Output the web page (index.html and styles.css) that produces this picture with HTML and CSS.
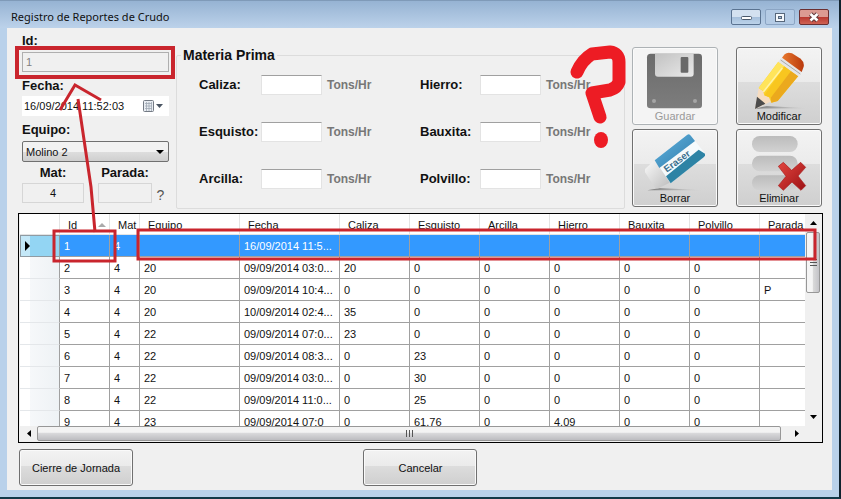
FILE: index.html
```html
<!DOCTYPE html>
<html lang="es">
<head>
    <meta charset="UTF-8">
    <meta name="viewport" content="width=device-width, initial-scale=1.0">
    <title>Registro de Reportes de Crudo</title>
    <link rel="stylesheet" href="styles.css">
</head>
<body>
    <div class="window">
        <header class="titlebar">
            <h1>Registro de Reportes de Crudo</h1>
            <div class="window-buttons">
                <button type="button" aria-label="Minimizar">
                    <svg width="28" height="14" viewBox="0 0 28 14"><rect x="9.500" y="6.500" width="10" height="3" rx="1" fill="#fff" stroke="#4b5a6c"/></svg>
                </button>
                <button type="button" class="maximize" aria-label="Maximizar">
                    <svg width="28" height="14" viewBox="0 0 28 14"><rect x="9.500" y="3.500" width="9" height="8" fill="#f4f8fc" stroke="#56677b"/><rect x="12.500" y="6.500" width="3" height="2" fill="#a9c0da" stroke="#56677b"/></svg>
                </button>
                <button type="button" class="close" aria-label="Cerrar">
                    <svg width="28" height="14" viewBox="0 0 28 14"><path d="M10.500 4l7 6.500M17.500 4l-7 6.500" stroke="#5f3a3c" stroke-width="4.500"/><path d="M10.500 4l7 6.500M17.500 4l-7 6.500" stroke="#fff" stroke-width="2.600"/></svg>
                </button>
            </div>
        </header>

        <main class="content">
            <form class="top">
                <!-- Datos del reporte -->
                <div class="report">
                    <label for="id">Id:</label>
                    <input type="text" id="id" class="id-box" value="1" disabled>
                    <label for="fecha">Fecha:</label>
                    <div class="date-box">
                        <input type="text" id="fecha" value="16/09/2014 11:52:03">
                        <button type="button" aria-label="Abrir calendario">
                            <svg width="22" height="14" viewBox="0 0 22 14">
                                <rect x="1.500" y="1.500" width="10" height="11" rx="1" fill="#e9edf2" stroke="#747b85"/>
                                <path d="M3 4.500h7M3 7h7M3 9.500h7M4.500 3v9M7 3v9M9.500 3v9" stroke="#a0a8b4" stroke-width="0.800"/>
                                <path d="M14 5h7l-3.500 4z" fill="#4a5563"/>
                            </svg>
                        </button>
                    </div>
                    <label for="equipo">Equipo:</label>
                    <select id="equipo">
                        <option>Molino 2</option>
                    </select>
                    <div class="pair">
                        <div class="field mat">
                            <label for="mat">Mat:</label>
                            <input type="text" id="mat" value="4" readonly>
                        </div>
                        <div class="field parada">
                            <label for="parada">Parada:</label>
                            <input type="text" id="parada" readonly>
                        </div>
                        <button type="button" class="help">?</button>
                    </div>
                </div>

                <fieldset class="materia">
                    <legend>Materia Prima</legend>
                    <label for="caliza">Caliza:</label>
                    <input type="text" id="caliza">
                    <span>Tons/Hr</span>
                    <label for="hierro">Hierro:</label>
                    <input type="text" id="hierro">
                    <span>Tons/Hr</span>
                    <label for="esquisto">Esquisto:</label>
                    <input type="text" id="esquisto">
                    <span>Tons/Hr</span>
                    <label for="bauxita">Bauxita:</label>
                    <input type="text" id="bauxita">
                    <span>Tons/Hr</span>
                    <label for="arcilla">Arcilla:</label>
                    <input type="text" id="arcilla">
                    <span>Tons/Hr</span>
                    <label for="polvillo">Polvillo:</label>
                    <input type="text" id="polvillo">
                    <span>Tons/Hr</span>
                </fieldset>

                <div class="actions">
                    <button type="button" class="action" disabled>
                        <svg width="60" height="57" viewBox="75 156 180 171">
                            <defs>
                                <linearGradient id="disk" x1="0" y1="0" x2="0" y2="1"><stop offset="0" stop-color="#6b6b6b"/><stop offset="1" stop-color="#7d7d7d"/></linearGradient>
                                <linearGradient id="shutter" x1="0" y1="0" x2="1" y2="1"><stop offset="0" stop-color="#c2c2c2"/><stop offset="1" stop-color="#e9e9e9"/></linearGradient>
                            </defs>
                            <path d="M92 161H236q10 0 10 10V315q0 10-10 10H92q-11 0-11-10V172q0-11 11-11z" fill="url(#disk)"/>
                            <path d="M105 161H221V221q0 9-9 9H114q-9 0-9-9z" fill="url(#shutter)"/>
                            <rect x="182" y="171" width="23" height="47" rx="3" fill="#686868"/>
                            <circle cx="102" cy="303" r="6" fill="#a5a5a5"/>
                            <circle cx="225" cy="303" r="6" fill="#a5a5a5"/>
                        </svg>
                        Guardar
                    </button>
                    <button type="button" class="action">
                        <svg width="60" height="57" viewBox="387 156 180 171">
                            <defs>
                                <linearGradient id="shade"><stop offset="0" stop-color="#777"/><stop offset="1" stop-color="#999" stop-opacity="0"/></linearGradient>
                                <linearGradient id="rubber"><stop offset="0" stop-color="#e8792f"/><stop offset="1" stop-color="#b9390c"/></linearGradient>
                            </defs>
                            <path d="M405 326L440 318 565 325z" fill="url(#shade)"/>
                            <path d="M405 327L416 264 462 300z" fill="#f6dcc0"/>
                            <path d="M405 327L411 290 436 311z" fill="#4c4c4c"/>
                            <path d="M416 264L475 185 535 228 473 303 454 308 447 292 433 286 429 273z" fill="#fbd02c"/>
                            <path d="M416 264L475 185 493 198 431 274z" fill="#ffe45a"/>
                            <path d="M433 286L494 199 513 213 452 293z" fill="#f8c61f"/>
                            <path d="M454 308L452 293 513 213 535 228 473 303z" fill="#eba91d"/>
                            <path d="M430 276L487 204" stroke="#fff3a5" stroke-width="5"/>
                            <path d="M475 185L485 174 545 216 535 229z" fill="#e5e5e5"/>
                            <path d="M482 180L541 222" stroke="#aaa" stroke-width="3"/>
                            <path d="M486 173L494 163Q502 155 516 160L542 176Q554 187 551 200L545 216z" fill="url(#rubber)"/>
                        </svg>
                        Modificar
                    </button>
                    <button type="button" class="action">
                        <svg width="60" height="57" viewBox="75 402 180 171">
                            <defs>
                                <linearGradient id="blue" x1="0" y1="0" x2="1" y2="1"><stop offset="0" stop-color="#62b3df"/><stop offset="1" stop-color="#2f7cab"/></linearGradient>
                                <linearGradient id="gum" x1="0" y1="0" x2="1" y2="1"><stop offset="0" stop-color="#fafafa"/><stop offset="1" stop-color="#bdbdbd"/></linearGradient>
                            </defs>
                            <path d="M82 571L120 564 250 571z" fill="url(#shade)"/>
                            <path d="M104 480L76 506Q72 512 77 520L103 560Q109 568 118 563L149 548z" fill="url(#gum)"/>
                            <path d="M104 481L201 405Q208 400 213 408L254 459Q258 465 252 471L152 550z" fill="#f5fafc"/>
                            <path d="M104 481L201 405Q208 400 213 408L225 423 118 504z" fill="url(#blue)"/>
                            <path d="M138 529L236 449 255 461Q258 465 252 471L152 550z" fill="#2d83a5"/>
                            <text class="eraser" transform="translate(140 518) rotate(-36)">Eraser</text>
                        </svg>
                        Borrar
                    </button>
                    <button type="button" class="action">
                        <svg width="60" height="57" viewBox="387 402 180 171">
                            <defs>
                                <linearGradient id="bar" x1="0" y1="0" x2="0" y2="1"><stop offset="0" stop-color="#bcbcbc"/><stop offset="1" stop-color="#d2d2d2"/></linearGradient>
                                <linearGradient id="cross" x1="0" y1="0" x2="1" y2="1"><stop offset="0" stop-color="#e2453f"/><stop offset="1" stop-color="#9c1114"/></linearGradient>
                            </defs>
                            <rect x="396" y="408" width="137" height="48" rx="23" fill="url(#bar)"/>
                            <rect x="396" y="467" width="137" height="47" rx="23" fill="url(#bar)"/>
                            <rect x="396" y="526" width="137" height="45" rx="22" fill="url(#bar)"/>
                            <path d="M475 499L490 487 515 511 542 487 557 502 534 528 557 557 543 571 516 546 490 571 475 557 498 529z" fill="url(#cross)" stroke="#a81c1d" stroke-width="2"/>
                        </svg>
                        Eliminar
                    </button>
                </div>
            </form>

            <!-- Listado de reportes -->
            <section class="grid">
                <div class="rows">
                    <table>
                        <colgroup>
                            <col class="c-head"><col class="c-id"><col class="c-mat"><col class="c-wide"><col class="c-wide">
                            <col class="c-num"><col class="c-num"><col class="c-num"><col class="c-num"><col class="c-num"><col class="c-num"><col>
                        </colgroup>
                        <thead>
                            <tr><th></th><th><span class="sorted">Id</span></th><th>Mat</th><th>Equipo</th><th>Fecha</th><th>Caliza</th><th>Esquisto</th><th>Arcilla</th><th>Hierro</th><th>Bauxita</th><th>Polvillo</th><th>Parada</th></tr>
                        </thead>
                        <tbody>
                            <tr class="selected"><th><span class="marker"></span></th><td>1</td><td>4</td><td></td><td>16/09/2014 11:5...</td><td></td><td></td><td></td><td></td><td></td><td></td><td></td></tr>
                            <tr><th></th><td>2</td><td>4</td><td>20</td><td>09/09/2014 03:0...</td><td>20</td><td>0</td><td>0</td><td>0</td><td>0</td><td>0</td><td></td></tr>
                            <tr><th></th><td>3</td><td>4</td><td>20</td><td>09/09/2014 10:4...</td><td>0</td><td>0</td><td>0</td><td>0</td><td>0</td><td>0</td><td>P</td></tr>
                            <tr><th></th><td>4</td><td>4</td><td>20</td><td>10/09/2014 02:4...</td><td>35</td><td>0</td><td>0</td><td>0</td><td>0</td><td>0</td><td></td></tr>
                            <tr><th></th><td>5</td><td>4</td><td>22</td><td>09/09/2014 07:0...</td><td>23</td><td>0</td><td>0</td><td>0</td><td>0</td><td>0</td><td></td></tr>
                            <tr><th></th><td>6</td><td>4</td><td>22</td><td>09/09/2014 08:3...</td><td>0</td><td>23</td><td>0</td><td>0</td><td>0</td><td>0</td><td></td></tr>
                            <tr><th></th><td>7</td><td>4</td><td>22</td><td>09/09/2014 03:0...</td><td>0</td><td>30</td><td>0</td><td>0</td><td>0</td><td>0</td><td></td></tr>
                            <tr><th></th><td>8</td><td>4</td><td>22</td><td>09/09/2014 11:0...</td><td>0</td><td>25</td><td>0</td><td>0</td><td>0</td><td>0</td><td></td></tr>
                            <tr><th></th><td>9</td><td>4</td><td>23</td><td>09/09/2014 07:0</td><td>0</td><td>61.76</td><td>0</td><td>4.09</td><td>0</td><td>0</td><td></td></tr>
                        </tbody>
                    </table>
                </div>
                <div class="vscroll">
                    <button type="button" aria-label="Subir"><svg width="7" height="4" viewBox="0 0 7 4"><path d="M0 4L3.500 0 7 4z"/></svg></button>
                    <div class="thumb"><i></i><i></i><i></i></div>
                    <button type="button" class="last" aria-label="Bajar"><svg width="7" height="4" viewBox="0 0 7 4"><path d="M0 0h7L3.500 4z"/></svg></button>
                </div>
                <div class="hscroll">
                    <button type="button" aria-label="Izquierda"><svg width="4" height="7" viewBox="0 0 4 7"><path d="M4 0v7L0 3.500z"/></svg></button>
                    <div class="thumb"><i></i><i></i><i></i></div>
                    <button type="button" class="last" aria-label="Derecha"><svg width="4" height="7" viewBox="0 0 4 7"><path d="M0 0v7l4-3.500z"/></svg></button>
                </div>
            </section>

            <footer class="bottom">
                <button type="button">Cierre de Jornada</button>
                <button type="button">Cancelar</button>
            </footer>
        </main>

        <!-- Marcas en rojo sobre el formulario -->
        <svg class="marks" width="841" height="499" viewBox="0 0 841 499">
            <g fill="none" stroke="#c9252d" stroke-width="3">
                <rect x="17" y="48" width="156" height="29" stroke-width="4"/>
                <rect x="54" y="231" width="61" height="30"/>
                <rect x="138" y="230" width="677" height="29"/>
                <path d="M60 110L75 85 101 100M78 99L91 187 95 232"/>
            </g>
            <path d="M577 72Q582 60 592 54L610 52Q619 53 619 62V82Q617 88 610 90L592 93 600 117" fill="none" stroke="#ed1c24" stroke-width="13" stroke-linecap="round" stroke-linejoin="round"/>
            <ellipse cx="601" cy="140" rx="7" ry="8" fill="#ed1c24"/>
        </svg>
    </div>
</body>
</html>
```
FILE: styles.css
```css
* {
    box-sizing: border-box;
}
body {
    margin: 0;
    font-family: "Liberation Sans", Arial, sans-serif;
    font-size: 11px;
    color: #111;
    background-color: #a8dcf0;
}
button, input, select {
    margin: 0;
    padding: 0;
    font: inherit;
    color: inherit;
}
button svg {
    display: block;
}
.window {
    position: relative;
    display: flex;
    flex-direction: column;
    height: 100vh;
    padding: 0 7px 7px;
    background-color: #b9d1ea;
    border-right: 2px solid #10222e;
    border-bottom: 2px solid #123848;
}

/* Title bar */
.titlebar {
    display: flex;
    justify-content: space-between;
    align-items: flex-start;
    height: 28px;
    margin: 0 -7px;
    padding: 8px 10px 0 11px;
    background: linear-gradient(#96b3d3, #bcd2ea);
    border-top: 1px solid #7f9ab8;
}
.titlebar h1 {
    margin: 0;
    font-family: "Noto Sans", sans-serif;
    font-size: 11px;
    line-height: 16px;
    font-weight: normal;
}
.window-buttons {
    display: flex;
    gap: 4px;
}
.window-buttons button {
    width: 30px;
    height: 16px;
    border: 1px solid #5a7391;
    border-radius: 2px;
    background: linear-gradient(#d3e1f0 50%, #a5bfdb 50%, #bcd3ea);
}
.window-buttons .maximize {
    border-color: #8ba5c4;
    background: #b4cbe5;
}
.window-buttons .close {
    border-color: #6b2f31;
    background: linear-gradient(#dc9a92 50%, #b9372f 50%, #cf6355);
}

/* Form */
.content {
    flex: 1;
    min-height: 0;
    display: flex;
    flex-direction: column;
    padding: 5px 9px 4px 11px;
    background-color: #f0f0f0;
}
.top {
    display: flex;
    gap: 7px;
    height: 180px;
}
.report {
    width: 151px;
    padding-left: 4px;
    display: flex;
    flex-direction: column;
}
.report label, .materia label {
    font-size: 13px;
    font-weight: bold;
    line-height: 16px;
}
.report input {
    min-width: 0;
    height: 20px;
    padding: 0 3px;
    border: 1px solid #d6d6d6;
    background-color: #f0f0f0;
}
.report .id-box {
    margin: 3px 0 6px;
    border-color: #afafaf;
    color: #808080;
}
.date-box {
    display: flex;
    align-items: center;
    height: 20px;
    margin: 2px 0 6px;
    background-color: #fff;
}
.date-box input {
    flex: 1;
    padding: 0 2px;
    border: none;
    background: none;
}
.date-box button {
    margin-right: 5px;
    border: none;
    background: none;
}
.report select {
    height: 21px;
    margin: 3px 0;
    padding: 0 3px;
    appearance: none;
    border: 1px solid #707070;
    border-radius: 2px;
    background: url("data:image/svg+xml,%3Csvg xmlns='http://www.w3.org/2000/svg' width='8' height='4'%3E%3Cpath d='M0 0h8L4 4z'/%3E%3C/svg%3E") right 4px center no-repeat, linear-gradient(#f2f2f2 50%, #dedede 50%, #cfcfcf);
}
.pair {
    display: flex;
    align-items: flex-end;
}
.field {
    display: flex;
    flex-direction: column;
    gap: 2px;
    text-align: center;
}
.field input {
    text-align: center;
}
.mat {
    width: 62px;
    margin-right: 14px;
}
.parada {
    width: 54px;
}
.help {
    flex: 1;
    border: none;
    background: none;
    color: #555;
    font-size: 14px;
}
.materia {
    flex: 1;
    display: grid;
    grid-template-columns: 62px 61px 98px 60px 61px 1fr;
    align-content: start;
    align-items: center;
    row-gap: 27px;
    height: 162px;
    margin: 14px 0 0;
    padding: 12px 0 0 22px;
    border: 1px solid #dcdcdc;
    border-radius: 2px;
    min-width: 0;
}
.materia legend {
    margin-left: -18px;
    padding: 0 2px;
    font-size: 14px;
    font-weight: bold;
    line-height: 16px;
}
.materia input {
    min-width: 0;
    height: 20px;
    border: 1px solid #e3e3e3;
    border-top-color: #a0a0a0;
    background-color: #fff;
}
.materia span {
    padding-left: 5px;
    font-size: 12px;
    font-weight: bold;
    color: #777;
}

/* Buttons */
.actions {
    display: grid;
    grid-template-columns: 86px 86px;
    gap: 4px 18px;
    align-content: start;
    padding: 14px 1px 0 0;
}
.action, .bottom button {
    border: 1px solid #707070;
    border-radius: 3px;
    background: linear-gradient(#f3f3f3, #ebebeb 45%, #dddddd 45%, #cfcfcf);
    box-shadow: inset 0 0 0 1px #fafafa;
}
.action {
    display: flex;
    flex-direction: column;
    align-items: center;
    height: 78px;
    padding-top: 4px;
    line-height: 14px;
}
.action:disabled {
    border-color: #adb2b5;
    background: #f4f4f4;
    color: #999;
}
.eraser {
    font-size: 29px;
    font-weight: bold;
    fill: #3a6f8d;
}

/* Data grid */
.grid {
    flex: 1;
    min-height: 0;
    display: grid;
    grid-template-columns: 1fr 16px;
    grid-template-rows: minmax(0, 1fr) 15px;
    padding: 0 1px 1px;
    border: 1px solid #000;
    background-color: #f0f0f0;
}
.rows {
    overflow: hidden;
    background-color: #fff;
}
table {
    width: 100%;
    table-layout: fixed;
    border-collapse: separate;
    border-spacing: 0;
}
.c-head { width: 40px; }
.c-id { width: 50px; }
.c-mat { width: 30px; }
.c-wide { width: 100px; }
.c-num { width: 70px; }
th, td {
    height: 22px;
    padding: 0 0 0 4px;
    border-right: 1px solid #a0a0a0;
    border-bottom: 1px solid #a0a0a0;
    line-height: 16px;
    text-align: left;
    font-weight: normal;
    white-space: nowrap;
}
td:last-child, th:last-child {
    border-right: none;
}
thead th {
    height: 21px;
    padding: 2px 0 0 8px;
    border-color: #e4e4e4;
}
tbody th {
    border-bottom-color: #e4e7ea;
    background: linear-gradient(90deg, #fff 25%, #f6f8fa 25%, #eef2f5);
}
.sorted {
    display: flex;
    align-items: center;
    justify-content: space-between;
    padding-right: 3px;
}
.sorted::after {
    content: "";
    border: 4px solid transparent;
    border-top: none;
    border-bottom-color: #aaa;
}
.selected td {
    background-color: #3399ff;
    color: #fff;
}
.selected th {
    border: 1px solid #8f9ba3;
    background: linear-gradient(90deg, #c4e8f8 25%, #93d5f3 25%);
}
.marker {
    display: block;
    width: 0;
    border: 5px solid transparent;
    border-left-color: #000;
    border-right: none;
}

/* Scroll bars */
.vscroll, .hscroll {
    display: flex;
    background-color: #f0f0f0;
}
.vscroll {
    flex-direction: column;
}
.hscroll {
    grid-column: 1 / 3;
}
.vscroll button, .hscroll button {
    display: flex;
    align-items: center;
    justify-content: center;
    border: none;
    background: none;
}
.vscroll button {
    height: 18px;
}
.hscroll button {
    width: 17px;
}
.thumb {
    display: flex;
    align-items: center;
    justify-content: center;
    gap: 2px;
    border: 1px solid #979797;
    border-radius: 2px;
}
.vscroll .thumb {
    flex-direction: column;
    height: 61px;
    margin: 0 1px;
    background: linear-gradient(90deg, #f5f5f5 45%, #dadada 50%, #c4c4c8);
}
.hscroll .thumb {
    flex: 1;
    background: linear-gradient(#f3f3f3 40%, #d8d8da 50%, #bcbcc0);
}
.thumb i {
    background-color: #555;
}
.vscroll i {
    width: 7px;
    height: 1px;
}
.hscroll i {
    width: 1px;
    height: 7px;
}
.vscroll .last {
    margin-top: auto;
}
.hscroll .last {
    width: 40px;
    padding-right: 8px;
}

.bottom {
    display: grid;
    grid-template-columns: 1fr 1fr 1fr;
    padding: 6px 1px 0;
}
.bottom button {
    width: 114px;
    height: 37px;
}
.bottom button:last-child {
    justify-self: center;
}

.marks {
    position: absolute;
    top: 0;
    left: 0;
    pointer-events: none;
}
```
